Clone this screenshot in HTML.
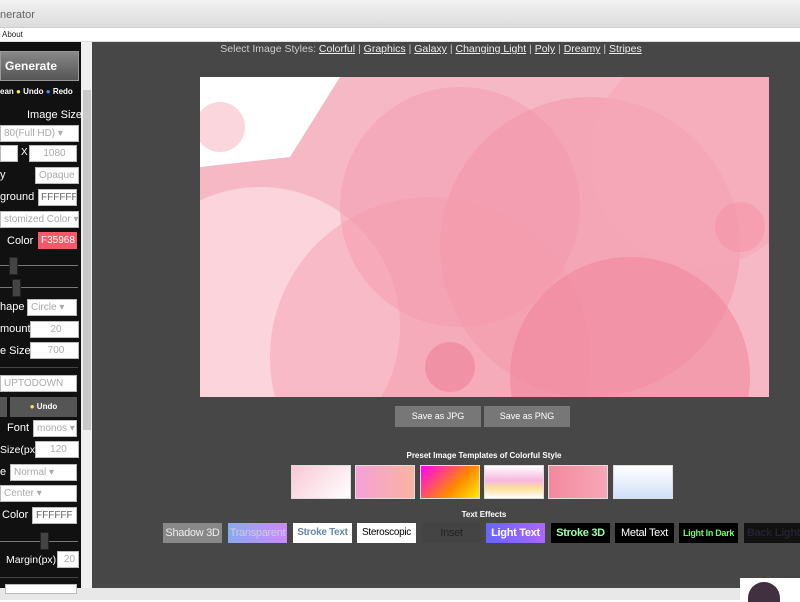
<!DOCTYPE html>
<html><head><meta charset="utf-8"><style>
*{box-sizing:border-box;margin:0;padding:0}
body{width:800px;height:600px;overflow:hidden;position:relative;font-family:"Liberation Sans",sans-serif;background:#fff}
.a{position:absolute;white-space:nowrap}
.lbl{color:#fff;font-size:11px}
.inp{background:#fff;border:1px solid #bbb;color:#aaa;font-size:10px;height:17px;line-height:15px;padding-left:3px;position:absolute;white-space:nowrap;overflow:hidden}
.sl{position:absolute;height:1px;background:#777}
.th{position:absolute;width:9px;height:18px;background:#444;border:1px solid #222}
.tp{position:absolute;top:465px;width:60px;height:34px;border:1px solid #ddd}
.te{position:absolute;top:523px;height:20px;font-size:11px;line-height:20px;text-align:center;white-space:nowrap;overflow:hidden;letter-spacing:-0.3px}
</style></head><body>
<div class="a" style="left:0;top:0;width:800px;height:28px;background:linear-gradient(#f2f2f2,#dcdcdc);border-bottom:1px solid #ccc"></div>
<div class="a" style="left:0;top:9px;font-size:11px;color:#666">nerator</div>
<div class="a" style="left:0;top:28px;width:800px;height:14px;background:#fff;border-bottom:1px solid #ddd"></div>
<div class="a" style="left:2px;top:30px;font-size:8px;color:#222">About</div>
<div class="a" style="left:0;top:42px;width:81px;height:556px;background:#111"></div>
<div class="a" style="left:81px;top:42px;width:11px;height:556px;background:#f0f0f0"></div>
<div class="a" style="left:83px;top:90px;width:8px;height:340px;background:#c8c8c8"></div>
<div class="a" style="left:92px;top:42px;width:708px;height:546px;background:#474747"></div>
<div class="a" style="left:0;top:588px;width:800px;height:12px;background:#e8e8e8"></div>
<!-- sidebar -->
<div class="a" style="left:0;top:51px;width:79px;height:30px;background:linear-gradient(#888,#555);border:1px solid #999;color:#fff;font-weight:bold;font-size:12px;line-height:28px;padding-left:4px">Generate</div>
<div class="a" style="left:0;top:87px;font-size:8px;color:#fff;font-weight:bold">ean <span style="color:#ee4">●</span> Undo <span style="color:#48f">●</span> Redo</div>
<div class="lbl a" style="left:27px;top:109px">Image Size</div>
<div class="inp" style="left:0;top:125px;width:79px">80(Full HD) ▾</div>
<div class="inp" style="left:0;top:145px;width:18px"></div>
<div class="a lbl" style="left:21px;top:147px;font-size:10px">X</div>
<div class="inp" style="left:29px;top:145px;width:48px;text-align:center">1080</div>
<div class="lbl a" style="left:0;top:169px">y</div>
<div class="inp" style="left:35px;top:167px;width:44px">Opaque ▾</div>
<div class="lbl a" style="left:0;top:191px">ground</div>
<div class="inp" style="left:38px;top:189px;width:39px;color:#666;padding-left:2px">FFFFFF</div>
<div class="inp" style="left:0;top:211px;width:79px">stomized Color ▾</div>
<div class="lbl a" style="left:7px;top:235px">Color</div>
<div class="inp" style="left:38px;top:232px;width:39px;background:#f35968;border-color:#f35968;color:#fff;padding-left:2px">F35968</div>
<div class="sl" style="left:0;top:265px;width:78px"></div><div class="th" style="left:9px;top:257px"></div>
<div class="sl" style="left:0;top:287px;width:78px"></div><div class="th" style="left:12px;top:279px"></div>
<div class="lbl a" style="left:0;top:301px">hape</div>
<div class="inp" style="left:27px;top:299px;width:50px">Circle ▾</div>
<div class="lbl a" style="left:0;top:323px">mount</div>
<div class="inp" style="left:30px;top:321px;width:49px;text-align:center">20</div>
<div class="lbl a" style="left:0;top:345px">e Size</div>
<div class="inp" style="left:30px;top:342px;width:49px;text-align:center">700</div>
<div class="sl" style="left:0;top:367px;width:78px;background:#444"></div>
<div class="inp" style="left:0;top:375px;width:77px">UPTODOWN</div>
<div class="a" style="left:0;top:397px;width:7px;height:20px;background:#555"></div>
<div class="a" style="left:10px;top:397px;width:67px;height:20px;background:#555;color:#fff;font-size:8px;font-weight:bold;text-align:center;line-height:20px"><span style="color:#ee4">●</span> Undo</div>
<div class="lbl a" style="left:7px;top:422px">Font</div>
<div class="inp" style="left:33px;top:420px;width:44px">monos ▾</div>
<div class="lbl a" style="left:0;top:444px;font-size:10.5px">Size(px)</div>
<div class="inp" style="left:35px;top:441px;width:44px;text-align:center">120</div>
<div class="lbl a" style="left:0;top:466px">e</div>
<div class="inp" style="left:10px;top:464px;width:67px">Normal ▾</div>
<div class="inp" style="left:0;top:485px;width:77px">Center ▾</div>
<div class="lbl a" style="left:2px;top:509px">Color</div>
<div class="inp" style="left:32px;top:507px;width:45px;color:#666">FFFFFF</div>
<div class="sl" style="left:0;top:541px;width:78px"></div><div class="th" style="left:40px;top:532px"></div>
<div class="lbl a" style="left:6px;top:554px;font-size:10.5px">Margin(px)</div>
<div class="inp" style="left:57px;top:551px;width:22px;text-align:center">20</div>
<div class="sl" style="left:0;top:577px;width:78px;background:#444"></div>
<div class="inp" style="left:5px;top:584px;width:72px;height:10px"></div>
<!-- main -->
<div class="a" style="left:92px;top:43px;width:678px;text-align:center;font-size:10.5px;color:#ccc">Select Image Styles: <u style="color:#eee">Colorful</u> | <u style="color:#eee">Graphics</u> | <u style="color:#eee">Galaxy</u> | <u style="color:#eee">Changing Light</u> | <u style="color:#eee">Poly</u> | <u style="color:#eee">Dreamy</u> | <u style="color:#eee">Stripes</u></div>
<div class="a" style="left:200px;top:77px;width:569px;height:320px;overflow:hidden;background:#f9c0cb">
<svg width="569" height="320" style="position:absolute;left:0;top:0">
<rect width="569" height="320" fill="#f7b8c5"/>
<path d="M0 0H140L90 80L0 90Z" fill="#fff"/>
<circle cx="20" cy="50" r="25" fill="#fbd6dd"/>
<circle cx="60" cy="250" r="140" fill="#fbdbe1" opacity=".8"/>
<circle cx="260" cy="130" r="120" fill="#f49fb2" opacity=".55"/>
<circle cx="390" cy="170" r="150" fill="#f393a8" opacity=".5"/>
<circle cx="500" cy="80" r="110" fill="#f5a6b7" opacity=".6"/>
<circle cx="230" cy="280" r="160" fill="#f49bae" opacity=".45"/>
<circle cx="430" cy="300" r="120" fill="#f07f98" opacity=".5"/>
<circle cx="250" cy="290" r="25" fill="#ee8098" opacity=".6"/>
<circle cx="540" cy="150" r="25" fill="#f390a5" opacity=".5"/>
</svg></div>
<div class="a" style="left:395px;top:406px;width:86px;height:21px;background:#777;color:#fff;font-size:9px;text-align:center;line-height:21px">Save as JPG</div>
<div class="a" style="left:484px;top:406px;width:86px;height:21px;background:#777;color:#fff;font-size:9px;text-align:center;line-height:21px">Save as PNG</div>
<div class="a" style="left:92px;top:451px;width:784px;text-align:center;font-size:8px;color:#fff;font-weight:bold">Preset Image Templates of Colorful Style</div>
<div class="tp" style="left:291px;background:linear-gradient(135deg,#f9c8d6,#fff)"></div>
<div class="tp" style="left:355px;background:linear-gradient(90deg,#f7a0d8,#f9b4a0)"></div>
<div class="tp" style="left:420px;background:linear-gradient(135deg,#f0f,#f80 60%,#fe0)"></div>
<div class="tp" style="left:484px;background:linear-gradient(#fff,#f8b6e0 45%,#fde09a 70%,#fff)"></div>
<div class="tp" style="left:548px;background:linear-gradient(90deg,#f4889e,#f6a8b8)"></div>
<div class="tp" style="left:613px;background:linear-gradient(#fff,#cfe0f8)"></div>
<div class="a" style="left:92px;top:510px;width:784px;text-align:center;font-size:8px;color:#fff;font-weight:bold">Text Effects</div>
<div class="te" style="left:163px;width:59px;background:#888;color:#eee">Shadow 3D</div>
<div class="te" style="left:228px;width:59px;background:linear-gradient(90deg,#8ae,#c8f);color:#ccd">Transparent</div>
<div class="te" style="left:293px;width:59px;background:#fff;color:#68a;font-weight:bold;font-size:10px">Stroke Text</div>
<div class="te" style="left:357px;width:59px;background:#fff;color:#000;font-size:10px">Steroscopic</div>
<div class="te" style="left:422px;width:59px;background:#444;color:#222">Inset</div>
<div class="te" style="left:486px;width:59px;background:linear-gradient(90deg,#66f,#a6f);color:#fff;font-weight:bold">Light Text</div>
<div class="te" style="left:551px;width:59px;background:#000;color:#9fa;font-weight:bold">Stroke 3D</div>
<div class="te" style="left:615px;width:59px;background:#000;color:#fff">Metal Text</div>
<div class="te" style="left:679px;width:59px;background:#000;color:#6f6;font-size:9px;font-weight:bold">Light In Dark</div>
<div class="te" style="left:744px;width:59px;background:#111;color:#223;font-weight:bold">Back Light</div>
<div class="a" style="left:740px;top:578px;width:60px;height:22px;background:#fff"></div>
<div class="a" style="left:748px;top:582px;width:32px;height:20px;border-radius:16px 16px 0 0;background:#403040"></div>
</body></html>
